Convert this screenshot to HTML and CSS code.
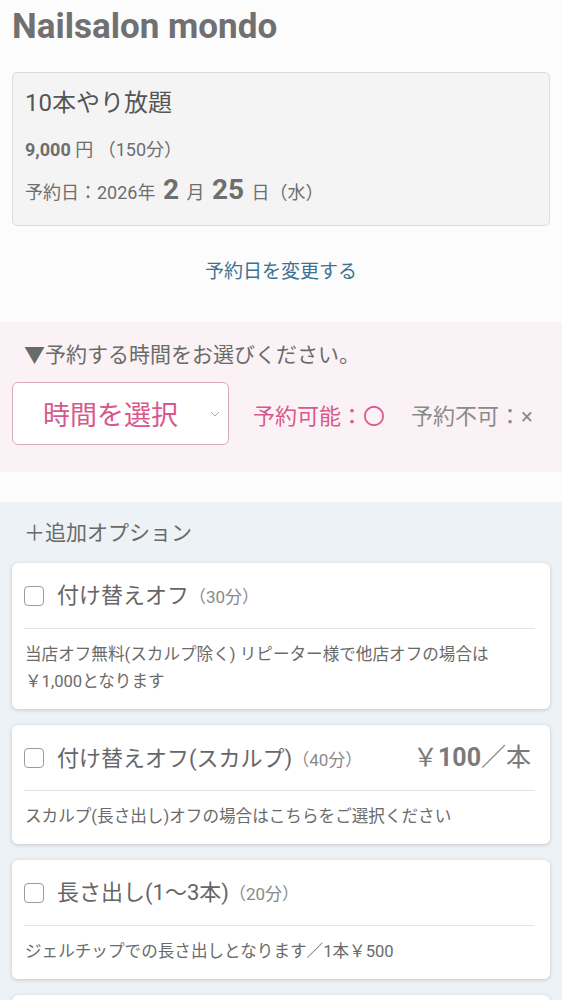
FILE: index.html
```html
<!DOCTYPE html>
<html lang="ja">
<head>
    <meta charset="UTF-8">
    <meta name="viewport" content="width=device-width, initial-scale=1.0">
    <title>Nailsalon mondo</title>
    <link rel="stylesheet" href="styles.css">
</head>
<body>

<header class="site-header">
    <h1>Nailsalon mondo</h1>
</header>

<section class="menu-box">
    <h2 class="menu-name">10本やり放題</h2>
    <p class="menu-price"><b>9,000</b> 円 （150分）</p>
    <p class="menu-date">予約日：2026年 <b class="big">2</b> 月 <b class="big">25</b> 日（水）</p>
</section>

<p class="change-date"><a href="#">予約日を変更する</a></p>

<section class="time-area">
    <p class="time-head">▼予約する時間をお選びください。</p>
    <div class="time-row">
        <div class="time-select">
            <span>時間を選択</span>
            <svg class="chev" width="10" height="6" viewBox="0 0 10 6"><path d="M1 1 L5 5 L9 1" fill="none" stroke="#a8a8a8" stroke-width="1"/></svg>
        </div>
        <span class="legend ok">予約可能：〇</span>
        <span class="legend ng">予約不可：×</span>
    </div>
</section>

<section class="options">
    <p class="options-head">＋追加オプション</p>

    <div class="option-card">
        <label class="option-top">
            <input type="checkbox">
            <span class="option-name">付け替えオフ</span>
            <span class="option-time">（30分）</span>
        </label>
        <p class="option-desc">当店オフ無料(スカルプ除く) リピーター様で他店オフの場合は￥1,000となります</p>
    </div>

    <div class="option-card">
        <label class="option-top">
            <input type="checkbox">
            <span class="option-name">付け替えオフ(スカルプ)</span>
            <span class="option-time">（40分）</span>
            <span class="option-price">￥<b>100</b>／本</span>
        </label>
        <p class="option-desc">スカルプ(長さ出し)オフの場合はこちらをご選択ください</p>
    </div>

    <div class="option-card">
        <label class="option-top">
            <input type="checkbox">
            <span class="option-name">長さ出し(1～3本)</span>
            <span class="option-time">（20分）</span>
        </label>
        <p class="option-desc">ジェルチップでの長さ出しとなります／1本￥500</p>
    </div>

    <div class="option-card">
        <label class="option-top">
            <input type="checkbox">
            <span class="option-name">ストーン追加</span>
            <span class="option-time">（10分）</span>
        </label>
        <p class="option-desc">お好きなストーンを追加できます</p>
    </div>
</section>

</body>
</html>
```

FILE: styles.css
```css
/* Nailsalon booking page */

body {
    font-family: Roboto, "Noto Sans CJK JP", sans-serif;
    background-color: #fcfcfc;
    color: #6e6e6e;
    margin: 0;
    padding: 0;
}
p {
    margin: 0;
}

.site-header {
    padding: 7px 12px 0;
}
.site-header h1 {
    margin: 0;
    font-size: 35px;
    line-height: 40px;
    font-weight: 700;
    color: #707070;
}

.menu-box {
    margin: 25px 12px 0;
    background-color: #f4f4f4;
    border: 1px solid #dcdcdc;
    border-radius: 5px;
    padding: 13px 12px 17px;
}
.menu-name {
    margin: 0;
    font-size: 24px;
    line-height: 34px;
    font-weight: 400;
    color: #555;
}
.menu-price {
    margin-top: 17px;
    font-size: 18px;
    line-height: 26px;
}
.menu-price b {
    font-weight: 700;
}
.menu-date {
    margin-top: 9px;
    font-size: 18px;
    line-height: 36px;
    height: 36px;
}
.menu-date .big {
    font-size: 28px;
    font-weight: 700;
    margin: 0 3px;
}

.change-date {
    text-align: center;
    padding: 32px 0 36px;
    font-size: 19px;
    line-height: 28px;
}
.change-date a {
    color: #3e7092;
    text-decoration: none;
}

.time-area {
    background-color: #fbf2f6;
    padding: 18px 12px 27px;
}
.time-head {
    font-size: 21px;
    line-height: 30px;
    color: #6a6a6a;
    padding-left: 12px;
}
.time-row {
    display: flex;
    align-items: center;
    margin-top: 12px;
}
.time-select {
    width: 217px;
    height: 63px;
    box-sizing: border-box;
    background-color: #fff;
    border: 1px solid #dba9bd;
    border-radius: 6px;
    display: flex;
    align-items: center;
    padding: 0 8px 0 30px;
    color: #d9588b;
    font-size: 27px;
}
.time-select span {
    flex: 1;
}
.legend {
    font-size: 22px;
    margin-left: 24px;
}
.legend.ok {
    color: #d9588b;
}
.legend.ng {
    color: #8a8a8a;
    margin-left: 26px;
}

.options {
    margin-top: 30px;
    background-color: #edf2f6;
    padding: 16px 12px 20px;
}
.options-head {
    font-size: 21px;
    line-height: 30px;
    padding-left: 12px;
    color: #6a6a6a;
}
.option-card {
    background-color: #fff;
    border-radius: 6px;
    box-shadow: 0 1px 4px rgba(0,0,0,0.18);
    margin-top: 16px;
    padding: 0 15px 0 12px;
}
.options-head + .option-card {
    margin-top: 15px;
}
.option-top {
    display: flex;
    align-items: baseline;
    padding: 15px 0 14px;
    border-bottom: 1px solid #e4e4e4;
    font-size: 22px;
    line-height: 36px;
    height: 36px;
}
.option-top input {
    width: 20px;
    height: 20px;
    box-sizing: border-box;
    margin: 0 13px 0 0;
    align-self: center;
    appearance: none;
    border: 1.5px solid #9c9c9c;
    border-radius: 4px;
    background: #fff;
}
.option-name {
    color: #666;
}
.option-time {
    font-size: 17px;
    color: #8a8a8a;
}
.option-price {
    margin-left: auto;
    margin-right: 4px;
    font-size: 25px;
    color: #7a7a7a;
}
.option-price b {
    font-weight: 700;
}
.option-desc {
    padding: 12px 0 14px 1px;
    font-size: 16.6px;
    line-height: 27px;
    color: #6a6a6a;
}
```
